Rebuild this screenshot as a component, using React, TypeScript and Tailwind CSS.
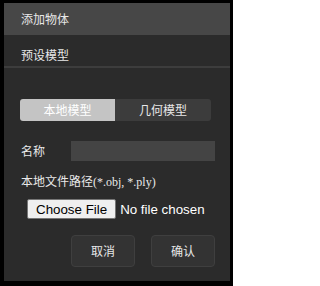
import { useState } from "react";

const cjk = "font-['Noto_Sans_CJK_SC',sans-serif]";

export default function App() {
    const [tab, setTab] = useState<"local" | "geo">("local");

    return (
        <div className="w-[233px] h-[286px] bg-black pt-[3px] pl-[4px]">
            <div className={`w-[226px] h-[278px] bg-[#2b2b2b] flex flex-col text-[12px] text-[#e8e8e8] ${cjk}`}>
                {/* Title bar */}
                <div className="h-[32px] shrink-0 bg-[#474747] px-[17px] flex items-center">添加物体</div>

                {/* Preset section */}
                <div className="h-[33px] shrink-0 px-[17px] pt-[11px] leading-[17px] border-b-2 border-[#3d3d3d]">预设模型</div>

                {/* Tabs */}
                <div className="mt-[31px] ml-[16px] flex">
                    <button
                        onClick={() => setTab("local")}
                        className={`w-[95px] h-[22px] rounded-l-[3px] flex items-center justify-center ${tab === "local" ? "bg-[#c4c4c4] text-white" : "bg-[#3c3c3c] text-[#e8e8e8]"}`}
                    >
                        本地模型
                    </button>
                    <button
                        onClick={() => setTab("geo")}
                        className={`w-[96px] h-[22px] rounded-r-[3px] flex items-center justify-center ${tab === "geo" ? "bg-[#c4c4c4] text-white" : "bg-[#3c3c3c] text-[#e8e8e8]"}`}
                    >
                        几何模型
                    </button>
                </div>

                {/* Name */}
                <div className="mt-[20px] flex items-center">
                    <span className="w-[67px] pl-[17px]">名称</span>
                    <input className="w-[144px] h-[20px] bg-[#444444] outline-none px-1 text-[12px]" />
                </div>

                {/* File path */}
                <div className="mt-[13px] pl-[17px] font-['Liberation_Serif','Noto_Sans_CJK_SC',serif] leading-[16px]">
                    本地文件路径(*.obj, *.ply)
                </div>
                <div className="mt-[9px] pl-[23px]">
                    <input
                        type="file"
                        accept=".obj,.ply"
                        className="text-[13.33px] text-white font-['Liberation_Sans',Arial,sans-serif] w-[200px] file:bg-[#efefef] file:text-black file:border file:border-[#767676] file:rounded-[2px] file:px-[8px] file:h-[20px] file:mr-[4px]"
                    />
                </div>

                {/* Actions */}
                <div className="mt-[15px] flex justify-end gap-[16px] pr-[15px]">
                    <button className="w-[64px] h-[32px] rounded-[4px] bg-[#333333] border border-[#3f3f3f]">取消</button>
                    <button className="w-[64px] h-[32px] rounded-[4px] bg-[#333333] border border-[#3f3f3f]">确认</button>
                </div>
            </div>
        </div>
    );
}
